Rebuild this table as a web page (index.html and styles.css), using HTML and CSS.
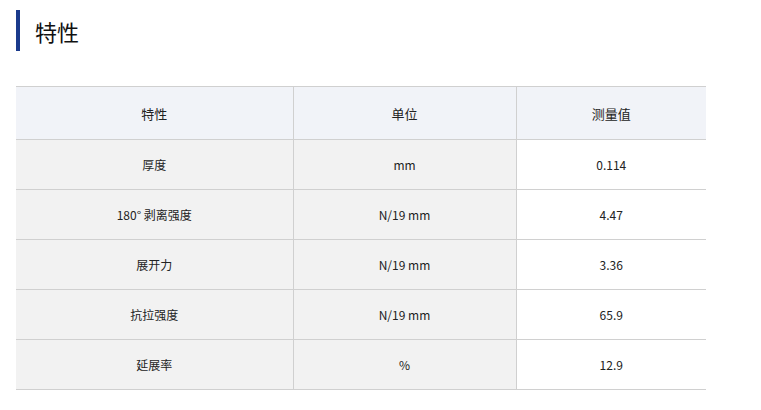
FILE: index.html
```
<!DOCTYPE html>
<html lang="zh-CN">
<head>
<meta charset="utf-8">
<link rel="stylesheet" href="styles.css">
</head>
<body>
<h2 class="title">特性</h2>
<table class="spec">
<colgroup><col class="c1"><col class="c2"><col class="c3"></colgroup>
<thead>
<tr><th>特性</th><th>单位</th><th>测量值</th></tr>
</thead>
<tbody>
<tr><td>厚度</td><td>mm</td><td class="val">0.114</td></tr>
<tr><td>180° 剥离强度</td><td>N/19 mm</td><td class="val">4.47</td></tr>
<tr><td>展开力</td><td>N/19 mm</td><td class="val">3.36</td></tr>
<tr><td>抗拉强度</td><td>N/19 mm</td><td class="val">65.9</td></tr>
<tr><td>延展率</td><td>%</td><td class="val">12.9</td></tr>
</tbody>
</table>
</body>
</html>
```
FILE: styles.css
```
body {
  margin: 0;
  padding: 10px 16px 0;
  background: #fff;
  font-family: "Noto Sans CJK SC", "Noto Sans", sans-serif;
  color: #222;
}
.title {
  margin: 0;
  height: 41px;
  line-height: 42px;
  border-left: 4px solid #1a3a8c;
  padding-left: 15px;
  font-size: 22px;
  font-weight: normal;
  color: #111;
}
.spec {
  margin-top: 35px;
  width: 690px;
  border-collapse: collapse;
  font-size: 12px;
}
.c1 { width: 277px; }
.c2 { width: 223px; }
.c3 { width: 190px; }
.spec th, .spec td {
  text-align: center;
  padding: 0;
  border-top: 1px solid #d0d0d0;
  border-bottom: 1px solid #d0d0d0;
}
.spec th + th, .spec td + td {
  border-left: 1px solid #d0d0d0;
}
.spec th {
  height: 52px;
  background: #f1f3f8;
  font-weight: normal;
  font-size: 13px;
}
.spec td {
  height: 49px;
  background: #f2f2f2;
}
.spec td.val {
  background: #fff;
}
```
